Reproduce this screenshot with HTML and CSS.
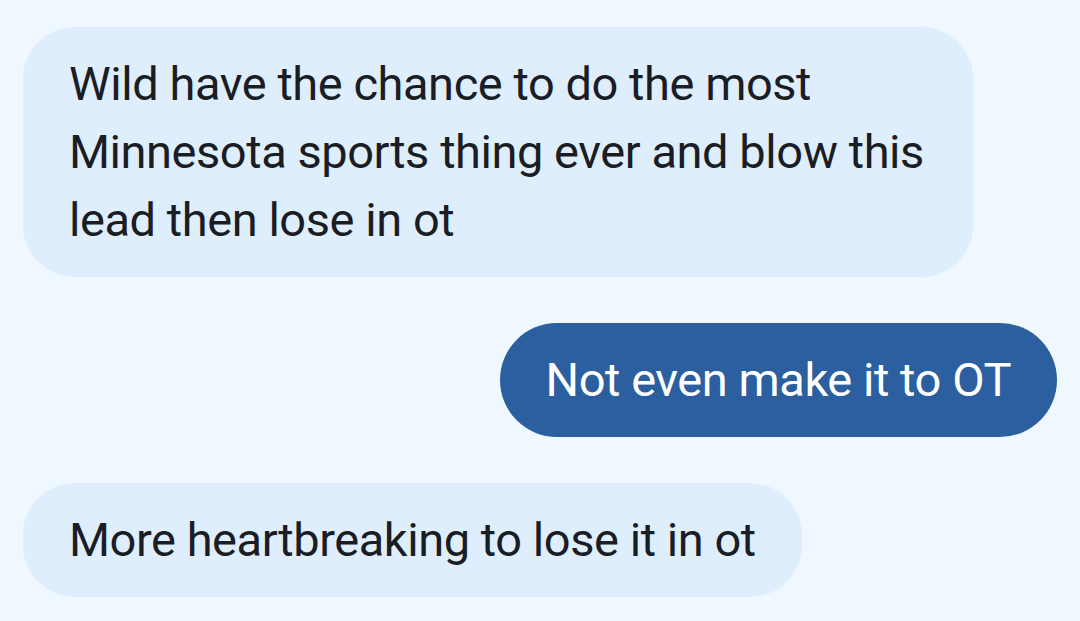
FILE: index.html
```html
<!DOCTYPE html>
<html>
<head>
  <title>Messages</title>
  <link rel="stylesheet" href="styles.css">
</head>
<body>
  <div class="thread">
    <div class="msg received">
      <p class="bubble">Wild have the chance to do the most Minnesota sports thing ever and blow this lead then lose in ot</p>
    </div>
    <div class="msg sent">
      <p class="bubble">Not even make it to OT</p>
    </div>
    <div class="msg received">
      <p class="bubble">More heartbreaking to lose it in ot</p>
    </div>
  </div>
</body>
</html>
```

FILE: styles.css
```css
:root {
  --bg-color: #eef8fe;
  --in-color: #dfeefd;
  --out-color: #2c5fa0;
  --text-color: #1a1d24;
}

body {
  margin: 0;
  background-color: var(--bg-color);
  font-family: Roboto, 'Noto Sans', sans-serif;
  color: var(--text-color);
  overflow: hidden;
}

.thread {
  display: flex;
  flex-direction: column;
  gap: 46px;
  padding: 27px 23px 0;
}

.msg {
  display: flex;
}

.msg.sent {
  justify-content: flex-end;
}

.bubble {
  margin: 0;
  padding: 23px 46px;
  font-size: 47px;
  line-height: 68px;
  letter-spacing: -0.45px;
  border-radius: 52px;
  max-width: 858px;
}

.received .bubble {
  background-color: var(--in-color);
}

.sent .bubble {
  background-color: var(--out-color);
  color: #ffffff;
  border-radius: 57px;
}
```
